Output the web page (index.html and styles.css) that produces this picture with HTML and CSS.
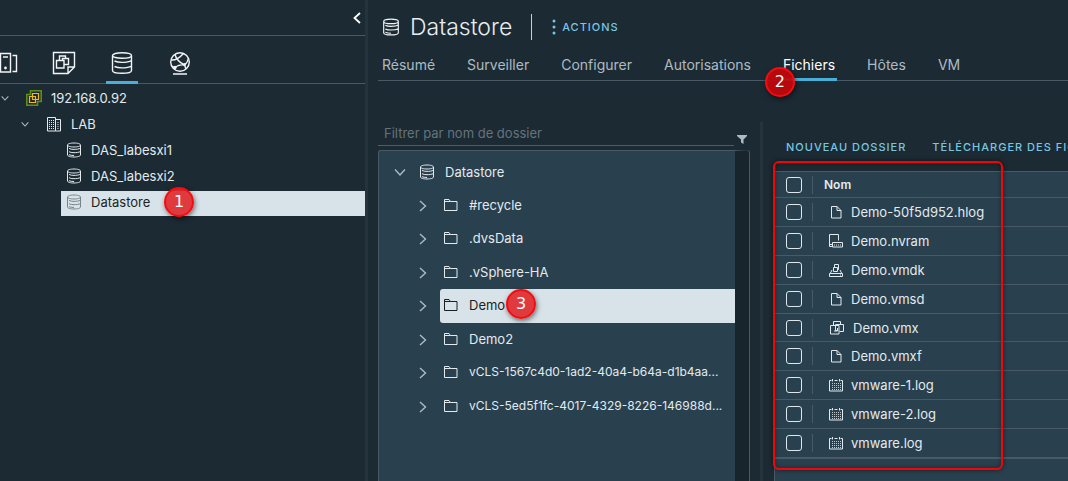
FILE: index.html
```html
<!DOCTYPE html>
<html lang="fr">
<head>
<meta charset="utf-8">
<title>Datastore</title>
<link rel="stylesheet" href="styles.css">
</head>
<body>
<svg class="sprite" aria-hidden="true">
  <symbol id="i-db" viewBox="0 0 16 16"><path d="M1.500 3v10c0 1.200 2.900 2 6.500 2s6.500-.8 6.500-2V3M1.500 3c0-1.200 2.900-2 6.500-2s6.500.8 6.500 2-2.900 2-6.500 2S1.500 4.200 1.500 3zM3 6.400c1.200.7 3 1 5 1s5-.3 6.500-1.200M3 9.700c1.200.7 3 1 5 1s5-.3 6.500-1.200M3 12.700c1.200.5 3 .8 5 .8"/></symbol>
  <symbol id="i-dbl" viewBox="0 0 24 24"><path d="M2.500 4.500v15c0 1.700 4.200 2.800 9.500 2.800s9.500-1.100 9.500-2.800v-15M2.500 4.500c0-1.700 4.200-2.800 9.500-2.800s9.500 1.100 9.500 2.800-4.200 2.800-9.500 2.800-9.500-1.100-9.500-2.800zM4.500 10c2 1 4.600 1.400 7.500 1.400s7-.4 9.500-1.900M4.500 15.500c2 1 4.600 1.400 7.500 1.400s7-.4 9.500-1.900"/></symbol>
  <symbol id="i-file" viewBox="0 0 14 14"><path d="M2.500 1.500h5.500l4 4v7.500H2.500zM8 1.500v4h4"/></symbol>
  <symbol id="i-folder" viewBox="0 0 14 14"><path d="M.5 12.500V1.500h4.500l1.500 2h6.500v9zM.5 3.500h6"/></symbol>
  <symbol id="i-cal" viewBox="0 0 14 14"><path d="M2.500 2.500H.5v10.500h13V2.500h-2M5.500 2.500h3M3.500 1v2.500M10.500 1v2.500"/><path d="M3 5.500h9M3 7.500h9M3 9.500h9M3 11.500h9" stroke-dasharray="1 1" opacity=".8"/></symbol>
  <symbol id="i-right" viewBox="0 0 12 12"><path d="M3 1l5.500 5L3 11"/></symbol>
  <symbol id="i-down" viewBox="0 0 12 12"><path d="M1 3.500L6 9l5-5.500"/></symbol>
</svg>

<div class="app">
  <aside class="sidebar">
    <header class="sidebar-top">
      <button class="plain" aria-label="Réduire"><svg class="icon collapse" viewBox="0 0 8 12"><path d="M7 1L1.500 6 7 11"/></svg></button>
    </header>
    <nav class="views" aria-label="Inventaires">
      <button class="view" aria-label="Hôtes et clusters"><svg class="icon lg" viewBox="0 0 24 24"><path d="M6.500 2.500h10v18.500h-10zM18.500 4.500h4v16h-4M9 6h5"/><circle cx="11.500" cy="17" r=".7"/></svg></button>
      <button class="view" aria-label="VM et modèles"><svg class="icon lg" viewBox="0 0 24 24"><path d="M1.500 1.500h21v14.500l-6.500 6.500H1.500zM16 22.500V16h6.500M7.500 9V5h6v3M12 13.500h4.500V7.500h-6V9M4.500 9.500h7.500v7.500H4.500z"/></svg></button>
      <button class="view active" aria-label="Stockage"><svg class="icon lg"><use href="#i-dbl"/></svg></button>
      <button class="view" aria-label="Réseau"><svg class="icon lg" viewBox="0 0 24 24"><circle cx="12" cy="11" r="9.300"/><path d="M5 23h14M7 3.500c1 4 4.500 8 9.500 10.500M16.500 14c2-1.500 3.500-4 4-7M3 9c4 .5 8-1.500 12.500-6.500M16.500 14C12 13.500 9 14.500 7 17M7 17l-3-2M16.500 14l1.500 4"/><circle cx="7" cy="16.500" r="1"/><circle cx="16.500" cy="13.500" r=".8"/></svg></button>
    </nav>
    <ul class="inventory">
      <li class="inv-row level-0"><svg class="icon caret"><use href="#i-down"/></svg><svg class="icon vcenter" viewBox="0 0 16 16"><path class="green" d="M4.500.8h10.700v10.700h-3.700v3.700H.8V4.500h3.700z"/><path class="gold" d="M6.500 3.500h6v6h-6zM3.500 6.500h6v6h-6z"/></svg><span>192.168.0.92</span></li>
      <li class="inv-row level-1"><svg class="icon caret"><use href="#i-down"/></svg><svg class="icon" viewBox="0 0 16 16"><path d="M1.500 15V1.500h8V15zM9.500 3.500h5V15h-5"/><path d="M3.500 4v9M5.500 4v9M7.500 4v9M12 6v7" stroke-dasharray="1 1"/></svg><span>LAB</span></li>
      <li class="inv-row level-2"><svg class="icon"><use href="#i-db"/></svg><span>DAS_labesxi1</span></li>
      <li class="inv-row level-2"><svg class="icon"><use href="#i-db"/></svg><span>DAS_labesxi2</span></li>
      <li class="inv-row level-2 selected"><svg class="icon"><use href="#i-db"/></svg><span>Datastore</span><b class="step step-1">1</b></li>
    </ul>
  </aside>
  <div class="splitter"></div>

  <main class="main">
    <header class="title-bar">
      <svg class="icon title-icon"><use href="#i-db"/></svg>
      <h1>Datastore</h1>
      <button class="action actions"><svg class="dots" viewBox="0 0 4 16"><circle cx="2" cy="2" r="1.500"/><circle cx="2" cy="8" r="1.500"/><circle cx="2" cy="14" r="1.500"/></svg>ACTIONS</button>
    </header>
    <nav class="tabs">
      <a class="tab" href="#">Résumé</a>
      <a class="tab" href="#">Surveiller</a>
      <a class="tab" href="#">Configurer</a>
      <a class="tab" href="#">Autorisations</a>
      <a class="tab active" href="#">Fichiers<b class="step step-2">2</b></a>
      <a class="tab" href="#">Hôtes</a>
      <a class="tab" href="#">VM</a>
    </nav>

    <div class="browser">
      <section class="folders">
        <div class="filter">
          <input type="text" placeholder="Filtrer par nom de dossier" aria-label="Filtrer par nom de dossier">
          <svg class="funnel" viewBox="0 0 10 9"><path d="M0 0h10v1L6.500 4.500V9L4 7.500v-3L0 1z"/></svg>
        </div>
        <div class="folder-box">
          <div class="folder-root"><svg class="icon chev"><use href="#i-down"/></svg><svg class="icon"><use href="#i-db"/></svg><span>Datastore</span></div>
          <ul class="folder-list">
            <li class="folder"><svg class="icon chev"><use href="#i-right"/></svg><span class="folder-name"><svg class="icon sm"><use href="#i-folder"/></svg>#recycle</span></li>
            <li class="folder"><svg class="icon chev"><use href="#i-right"/></svg><span class="folder-name"><svg class="icon sm"><use href="#i-folder"/></svg>.dvsData</span></li>
            <li class="folder"><svg class="icon chev"><use href="#i-right"/></svg><span class="folder-name"><svg class="icon sm"><use href="#i-folder"/></svg>.vSphere-HA</span></li>
            <li class="folder"><svg class="icon chev"><use href="#i-right"/></svg><span class="folder-name selected"><svg class="icon sm"><use href="#i-folder"/></svg>Demo<b class="step step-3">3</b></span></li>
            <li class="folder"><svg class="icon chev"><use href="#i-right"/></svg><span class="folder-name"><svg class="icon sm"><use href="#i-folder"/></svg>Demo2</span></li>
            <li class="folder"><svg class="icon chev"><use href="#i-right"/></svg><span class="folder-name long"><svg class="icon sm"><use href="#i-folder"/></svg>vCLS-1567c4d0-1ad2-40a4-b64a-d1b4aa...</span></li>
            <li class="folder"><svg class="icon chev"><use href="#i-right"/></svg><span class="folder-name long"><svg class="icon sm"><use href="#i-folder"/></svg>vCLS-5ed5f1fc-4017-4329-8226-146988d...</span></li>
          </ul>
        </div>
      </section>
      <div class="splitter"></div>
      <section class="files">
        <div class="toolbar">
          <button class="action">NOUVEAU DOSSIER</button>
          <button class="action">TÉLÉCHARGER DES FICHIERS</button>
        </div>
        <div class="grid">
          <table>
            <thead><tr><th class="pick"><input type="checkbox" aria-label="Tout sélectionner"></th><th class="name">Nom</th></tr></thead>
            <tbody>
              <tr><td class="pick"><input type="checkbox" id="f1"></td><td class="name"><label for="f1"><svg class="icon sm"><use href="#i-file"/></svg>Demo-50f5d952.hlog</label></td></tr>
              <tr><td class="pick"><input type="checkbox" id="f2"></td><td class="name"><label for="f2"><svg class="icon sm" viewBox="0 0 14 14"><path d="M3 12.500H.5V.5h9v6M3.500 8.500h10v4.500h-10zM3 10.500H1"/><path d="M5 11h8" stroke-dasharray="1 1"/></svg>Demo.nvram</label></td></tr>
              <tr><td class="pick"><input type="checkbox" id="f3"></td><td class="name"><label for="f3"><svg class="icon sm" viewBox="0 0 14 14"><path d="M.5 10.500h13v3H.5zM1.500 10l1.500-3M12.500 10L11 7M4.500 4.500h4v4h-4zM5.500 4V1.500h4v5H9M11 12h1"/></svg>Demo.vmdk</label></td></tr>
              <tr><td class="pick"><input type="checkbox" id="f4"></td><td class="name"><label for="f4"><svg class="icon sm"><use href="#i-file"/></svg>Demo.vmsd</label></td></tr>
              <tr class="vm"><td class="pick"><input type="checkbox" id="f5"></td><td class="name"><label for="f5"><svg class="icon" viewBox="0 0 16 16"><path d="M1.500 5.500h8.500v8.500H1.500zM4.500 5V1.500h7V4M10.500 11.500h4V4.500h-8v6H9M8.500 8v3H5"/></svg>Demo.vmx</label></td></tr>
              <tr><td class="pick"><input type="checkbox" id="f6"></td><td class="name"><label for="f6"><svg class="icon sm"><use href="#i-file"/></svg>Demo.vmxf</label></td></tr>
              <tr><td class="pick"><input type="checkbox" id="f7"></td><td class="name"><label for="f7"><svg class="icon sm"><use href="#i-cal"/></svg>vmware-1.log</label></td></tr>
              <tr><td class="pick"><input type="checkbox" id="f8"></td><td class="name"><label for="f8"><svg class="icon sm"><use href="#i-cal"/></svg>vmware-2.log</label></td></tr>
              <tr><td class="pick"><input type="checkbox" id="f9"></td><td class="name"><label for="f9"><svg class="icon sm"><use href="#i-cal"/></svg>vmware.log</label></td></tr>
            </tbody>
          </table>
          <div class="highlight"></div>
        </div>
      </section>
    </div>
  </main>
</div>
</body>
</html>
```
FILE: styles.css
```css
* { box-sizing: border-box; }
body { margin: 0; background: #1c2a33; color: #e3eaee; font: 13px/20px Inter, "Liberation Sans", sans-serif; overflow: hidden; }
button { font: inherit; color: inherit; background: none; border: 0; padding: 0; margin: 0; }
ul { list-style: none; margin: 0; padding: 0; }
.sprite { display: none; }

.icon { width: 16px; height: 16px; flex: none; fill: none; stroke: currentColor; stroke-width: 1; }
.icon.sm { width: 14px; height: 14px; }
.icon.lg { width: 24px; height: 24px; stroke-width: 1.4; }
.icon.caret { width: 8px; height: 8px; color: #adbbc4; stroke-width: 1.6; }
.icon.chev { width: 12px; height: 12px; color: #adbbc4; stroke-width: 1.4; }
.icon.collapse { width: 8px; height: 12px; stroke-width: 1.8; display: block; }

.app { display: flex; min-height: 100vh; }
.splitter { flex: 0 0 3px; background: #25333d; }

/* Inventory sidebar */
.sidebar { flex: 0 0 365px; }
.sidebar-top { display: flex; justify-content: flex-end; align-items: center; height: 36px; padding-right: 4px; border-bottom: 1px solid #495a67; color: #fff; }
.views { display: flex; gap: 26px; height: 48px; margin-left: -10px; border-bottom: 1px solid #495a67; }
.view { width: 32px; height: 48px; padding-top: 8px; color: #f2f5f7; border-bottom: 3px solid transparent; }
.view.active { border-color: #49afd9; }
.view .icon { display: block; margin: 0 auto; }
.inventory { padding-top: 3px; }
.inv-row { display: flex; align-items: center; height: 25px; margin-bottom: 1px; padding-bottom: 3px; position: relative; }
.inv-row > span { margin-left: 9px; }
.inv-row .caret + .icon { margin-left: 17px; }
.level-0 { padding-left: 1px; }
.level-1 { padding-left: 21px; }
.level-2 { margin-left: 61px; padding-left: 5px; }
.selected { background: #d8e3e9; color: #1b1f22; }
.inv-row.selected .icon { color: #77838b; }
.green { stroke: #5c8f16; stroke-width: 1.6; }
.gold { stroke: #f5b914; stroke-width: 1.2; }

/* Object header */
.main { flex: 1; min-width: 0; display: flex; flex-direction: column; }
.title-bar { display: flex; align-items: center; height: 54px; padding-left: 14px; }
.title-icon { width: 18px; height: 18px; color: #f2f5f7; }
h1 { margin: 0 0 0 10px; padding-right: 19px; font-size: 23px; line-height: 26px; font-weight: 300; color: #eaedf0; border-right: 1px solid #c5ced4; }
.action { color: #79c6e0; font-size: 11px; font-weight: 500; letter-spacing: 1px; white-space: nowrap; }
.actions { display: flex; align-items: center; gap: 6px; margin-left: 20px; }
.dots { width: 4px; height: 16px; fill: currentColor; }
.tabs { display: flex; gap: 28px; height: 27px; margin-left: 10px; padding-left: 2px; border-bottom: 1px solid #495a67; }
.tab { position: relative; height: 27px; padding: 0 2px; font-size: 14px; line-height: 22px; color: #adbbc4; text-decoration: none; border-bottom: 3px solid transparent; }
.tab.active { color: #fff; border-color: #49afd9; }

/* Folder tree */
.browser { flex: 1; display: flex; margin-top: 41px; padding-left: 10px; }
.folders { flex: 0 0 371px; min-width: 0; margin-right: 11px; display: flex; flex-direction: column; }
.filter { display: flex; align-items: center; gap: 3px; height: 24px; margin-bottom: 4px; }
.filter input { width: 356px; height: 24px; padding: 0 6px 2px; font: inherit; color: #e3eaee; background: none; border: 0; border-bottom: 1px solid #565a60; outline: 0; }
.filter input::placeholder { color: #65737d; opacity: 1; }
.funnel { width: 10px; height: 9px; margin-top: 10px; fill: #adbbc4; }
.folder-box { flex: 1; background: #29404e; border: 1px solid #495a67; border-right: 14px solid #19252d; border-bottom: 0; border-radius: 3px 3px 0 0; box-shadow: 1px 0 #495a67; }
.folder-root { display: flex; align-items: center; height: 38px; padding: 3px 0 0 15px; }
.folder-root .icon + .icon { margin-left: 13px; }
.folder-root span { margin-left: 10px; }
.folder-list { display: grid; grid-auto-rows: 33px 34px; }
.folder { display: flex; align-items: center; padding-left: 38px; }
.folder .chev { margin: 0 11px 0 0; }
.folder-name { position: relative; flex: 1; min-width: 0; align-self: stretch; display: flex; align-items: center; gap: 11px; padding: 0 0 2px 4px; white-space: nowrap; border-radius: 3px 0 0 3px; }
.folder-name.long { font-size: 12px; }

/* File list */
.files { flex: 1; min-width: 0; padding-left: 11px; display: flex; flex-direction: column; }
.toolbar { display: flex; gap: 26px; height: 49px; padding-left: 12px; overflow: hidden; }
.grid { position: relative; flex: 1; background: #29404e; border: 1px solid #495a67; border-right: 0; border-bottom: 0; }
table { width: 100%; border-collapse: separate; border-spacing: 0; border-bottom: 1px solid #495a67; }
th, td { height: 29px; padding: 0; border-bottom: 1px solid #495a67; text-align: left; }
th { height: 26px; font-size: 12px; font-weight: 600; }
.vm td { height: 28px; }
.pick { width: 38px; padding-left: 11px; background: linear-gradient(#495a67, #495a67) right center / 1px 18px no-repeat; }
th.name { padding-left: 11px; }
td.name { padding-left: 16px; }
label { display: flex; align-items: center; gap: 8px; }
.pick input { appearance: none; display: block; width: 16px; height: 16px; margin: 0; border: 1px solid #dfe7ec; border-radius: 3px; }
.highlight { position: absolute; left: -2px; top: -11px; width: 230px; height: 309px; border: 2px solid #f40408; border-radius: 6px; box-shadow: 0 0 5px #0008, inset 0 0 5px #0006; pointer-events: none; }

/* Numbered callouts */
.step { position: absolute; z-index: 2; width: 30px; height: 30px; border: 2px solid #f80a0e; border-radius: 50%; background: #df292de8; color: #fff; font: 16px/26px "DejaVu Sans", sans-serif; text-align: center; box-shadow: 1px 2px 5px #0008; }
.step-1 { left: 103px; top: -4px; }
.step-2 { left: -16px; top: 13px; background: #c0070bf0; }
.step-3 { left: 66px; top: 0; }
```
